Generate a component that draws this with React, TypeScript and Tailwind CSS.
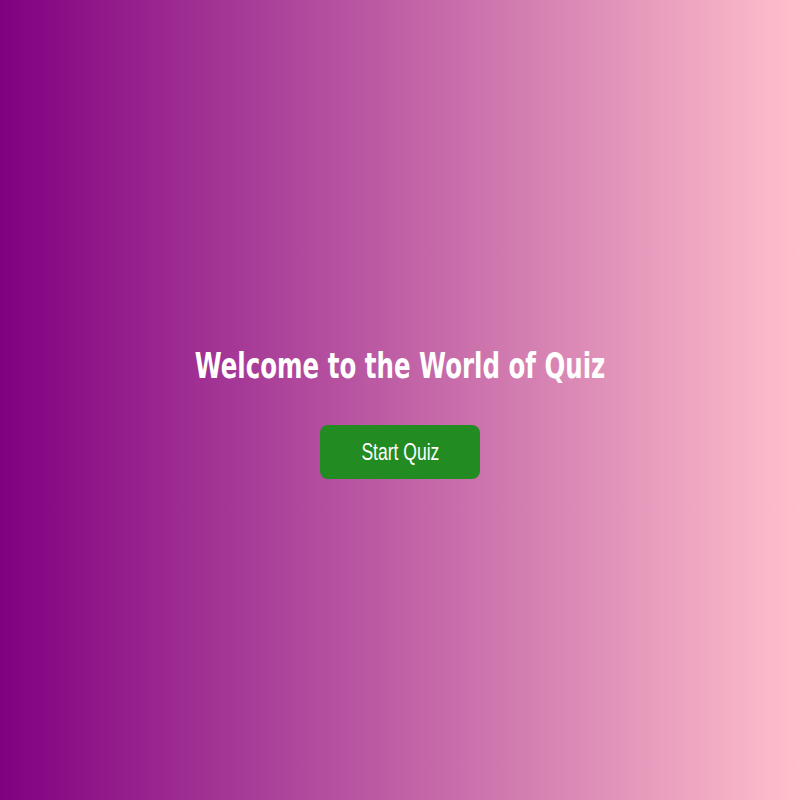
import React from "react";

export default function App() {
  return (
    <div className="flex h-screen w-full flex-col items-center justify-center bg-[linear-gradient(to_right,#800080,#ffc0cb)] pt-[24px]">
      <h1 className="scale-x-[0.68] whitespace-nowrap font-['DejaVu_Sans',sans-serif] text-[36px] leading-[42px] font-bold text-white">
        Welcome to the World of Quiz
      </h1>
      <button className="mt-[38px] h-[54px] w-[160px] rounded-lg bg-[#228b22] text-white">
        <span className="inline-block scale-x-[0.73] font-['Liberation_Sans',Arial,sans-serif] text-[24px]">
          Start Quiz
        </span>
      </button>
    </div>
  );
}
